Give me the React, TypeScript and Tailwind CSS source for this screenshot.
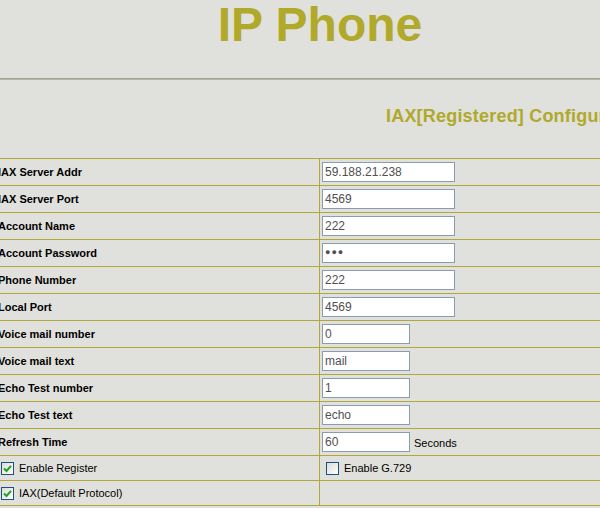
import React from 'react';

const gold = '#b0a92a';

type Row = {
  label: string;
  value: string;
  short?: boolean;
  suffix?: string;
  secret?: boolean;
};

const rows: Row[] = [
  { label: 'IAX Server Addr', value: '59.188.21.238' },
  { label: 'IAX Server Port', value: '4569' },
  { label: 'Account Name', value: '222' },
  { label: 'Account Password', value: '●●●', secret: true },
  { label: 'Phone Number', value: '222' },
  { label: 'Local Port', value: '4569' },
  { label: 'Voice mail number', value: '0', short: true },
  { label: 'Voice mail text', value: 'mail', short: true },
  { label: 'Echo Test number', value: '1', short: true },
  { label: 'Echo Test text', value: 'echo', short: true },
  { label: 'Refresh Time', value: '60', short: true, suffix: 'Seconds' },
];

const Check: React.FC<{ checked?: boolean }> = ({ checked }) => (
  <span className="flex h-[13px] w-[13px] shrink-0 items-center justify-center border border-[#1c5180] bg-gradient-to-br from-[#dcdcd6] to-white">
    {checked && (
      <svg width="9" height="9" viewBox="0 0 9 9">
        <path d="M1 4.5 L3.5 7 L8 1.8" fill="none" stroke="#21a121" strokeWidth="2" />
      </svg>
    )}
  </span>
);

export default function App() {
  return (
    <div
      className="h-[508px] w-[600px] overflow-hidden bg-[#e0e0dc]"
      style={{ fontFamily: '"Liberation Sans", Arial, sans-serif' }}
    >
      {/* Header */}
      <div className="w-[640px] pt-[1px] text-center">
        <h1 className="text-[48px] font-bold leading-[48px]" style={{ color: gold }}>
          IP Phone
        </h1>
      </div>
      <div className="mt-[29px] h-[2px] w-[640px] border-t border-b border-t-[#a0a294] border-b-[#b4b6aa]" />

      {/* Sub title */}
      <div className="h-[78px] w-[600px] overflow-hidden whitespace-nowrap pl-[386px] pt-[25px]">
        <span className="text-[18px] font-bold leading-[20px] tracking-[0.2px]" style={{ color: gold }}>
          IAX[Registered] Configuration
        </span>
      </div>

      {/* Table */}
      <div className="w-[640px] border-t border-[#b0a93a]">
        {rows.map((row) => (
          <div key={row.label} className="flex h-[27px] border-b border-[#b0a93a]">
            <div className="flex w-[320px] items-center border-r border-[#b0a93a]">
              <span className="-ml-[2px] text-[11px] font-bold text-black">{row.label}</span>
            </div>
            <div className="flex flex-1 items-center pl-[2px]">
              <div
                className={`flex h-[20px] items-center border border-[#8a9cb2] bg-white pl-[2px] text-[#505050] ${
                  row.secret ? 'text-[9px] tracking-[1px]' : 'text-[12px]'
                } ${row.short ? 'w-[88px]' : 'w-[133px]'}`}
              >
                {row.value}
              </div>
              {row.suffix && <span className="ml-[4px] mt-[3px] text-[11px] text-black">{row.suffix}</span>}
            </div>
          </div>
        ))}

        <div className="flex h-[25px] border-b border-[#b0a93a]">
          <div className="flex w-[320px] items-center gap-[5px] border-r border-[#b0a93a] pl-[1px] pt-[1px]">
            <Check checked />
            <span className="text-[11px] text-black">Enable Register</span>
          </div>
          <div className="flex flex-1 items-center gap-[5px] pl-[6px] pt-[1px]">
            <Check />
            <span className="text-[11px] text-black">Enable G.729</span>
          </div>
        </div>
        <div className="flex h-[25px] border-b border-[#b0a93a]">
          <div className="flex w-[320px] items-center gap-[5px] border-r border-[#b0a93a] pl-[1px] pt-[1px]">
            <Check checked />
            <span className="text-[11px] text-black">IAX(Default Protocol)</span>
          </div>
          <div className="flex-1" />
        </div>
      </div>
    </div>
  );
}
